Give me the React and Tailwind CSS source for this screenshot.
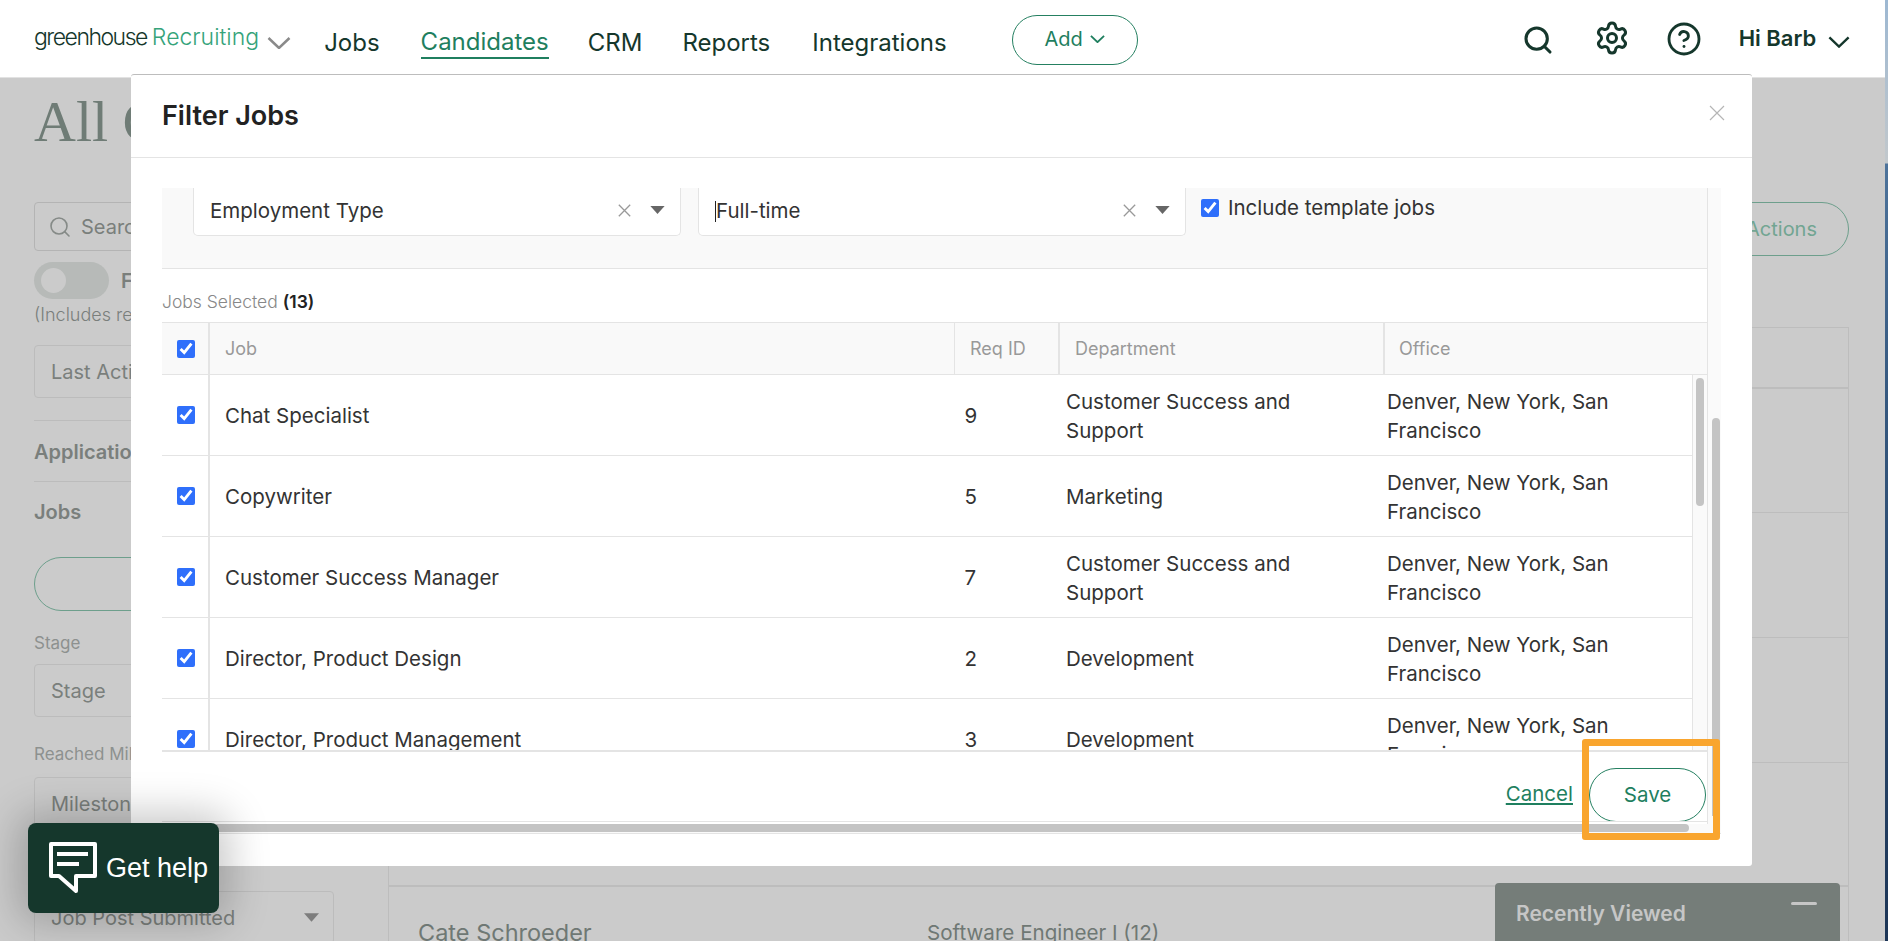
import React from "react";
import { Search, Settings, CircleHelp } from "lucide-react";

const Chevron = ({ className, sw = 2 }) => (
  <svg viewBox="0 0 24 12" fill="none" stroke="currentColor" strokeWidth={sw} className={className}>
    <polyline points="1.5,1 12,11 22.5,1" />
  </svg>
);
const Cross = ({ className, sw = 1.6 }) => (
  <svg viewBox="0 0 16 16" fill="none" stroke="currentColor" strokeWidth={sw} className={className}>
    <path d="M1 1 15 15M15 1 1 15" />
  </svg>
);
const Caret = ({ className }) => (
  <svg viewBox="0 0 16 9" fill="currentColor" className={className}>
    <polygon points="0,0 16,0 8,9" />
  </svg>
);
const Check = () => (
  <input type="checkbox" checked readOnly className="m-0 h-[18px] w-[18px] accent-[#2f6ffb]" />
);

const rows = [
  ["Chat Specialist", "9", ["Customer Success and", "Support"]],
  ["Copywriter", "5", ["Marketing"]],
  ["Customer Success Manager", "7", ["Customer Success and", "Support"]],
  ["Director, Product Design", "2", ["Development"]],
  ["Director, Product Management", "3", ["Development"]],
];

const GreyBox = ({ children, className = "" }) => (
  <div className={`flex h-[53px] w-[300px] items-center rounded-[4px] border border-[#bcbcbc] pl-[16px] text-[20px] text-[#7a7f7c] ${className}`}>
    {children}
  </div>
);

function Sidebar() {
  return (
    <div className="ml-[34px] flex w-[300px] shrink-0 flex-col text-[#7a7f7c]">
      <div className="mt-[12px] h-[64px] whitespace-nowrap [font-family:Liberation_Serif,serif] text-[58px] leading-[64px] text-[#6f7c76]">All Candidates</div>
      <div className="mt-[48px] flex h-[49px] w-[300px] items-center rounded-[4px] border border-[#b4b4b4] pl-[13px] text-[20px]">
        <Search className="h-[24px] w-[24px] text-[#858a87]" strokeWidth={1.6} />
        <span className="ml-[9px]">Search</span>
      </div>
      <div className="mt-[11px] flex h-[37px] items-center">
        <div className="flex h-[37px] w-[75px] items-center rounded-full bg-[#b7bab8] pl-[7px]">
          <div className="h-[25px] w-[25px] rounded-full bg-[#cbcbcb]" />
        </div>
        <span className="ml-[12px] text-[20px] font-semibold">Full Stage</span>
      </div>
      <div className="mt-[4px] h-[24px] whitespace-nowrap text-[18px] font-light leading-[24px]">(Includes results)</div>
      <GreyBox className="mt-[18px]">Last Activity</GreyBox>
      <div className="mt-[22px] flex h-[62px] items-center border-y border-[#bcbcbc] pt-[2px] text-[20px] font-semibold">Application</div>
      <div className="flex h-[60px] items-center text-[20px] font-semibold">Jobs</div>
      <div className="mt-[15px] flex h-[54px] items-center justify-center rounded-full border border-[#6d9f8c] text-[20px] text-[#6d9f8c]">Filter</div>
      <div className="mt-[20px] h-[24px] text-[17px] leading-[24px] text-[#8d918f]">Stage</div>
      <GreyBox className="mt-[9px]">Stage</GreyBox>
      <div className="mt-[25px] h-[24px] whitespace-nowrap text-[17px] leading-[24px] text-[#8d918f]">Reached Milestone</div>
      <GreyBox className="mt-[11px]">Milestone</GreyBox>
      <GreyBox className="mt-[61px] justify-between pr-[14px]">
        Job Post Submitted
        <Caret className="h-[9px] w-[15px] text-[#7d7d7d]" />
      </GreyBox>
    </div>
  );
}

function MainPanel() {
  return (
    <div className="ml-[54px] flex w-[1461px] shrink-0 flex-col">
      <div className="mt-[124px] flex h-[54px] justify-end">
        <div className="flex w-[220px] items-center justify-end rounded-full border border-[#6d9f8c] pr-[31px] text-[20px] text-[#72a592]">Actions</div>
      </div>
      <div className="mt-[71px] flex flex-col border-x border-t border-[#bdbdbd]">
        <div className="h-[61px] border-b-2 border-[#bdbdbd]" />
        <div className="h-[124px] border-b border-[#bdbdbd]" />
        <div className="h-[125px] border-b border-[#bdbdbd]" />
        <div className="h-[125px] border-b border-[#bdbdbd]" />
        <div className="h-[124px] border-b-2 border-[#bdbdbd]" />
        <div className="flex whitespace-nowrap pl-[29px] pt-[30px] text-[#6f7874]">
          <span className="w-[509px] text-[23.5px] leading-[32px]">Cate Schroeder</span>
          <span className="text-[20.6px] leading-[32px]">Software Engineer I (12)</span>
        </div>
      </div>
    </div>
  );
}

function SelectBox({ className = "", cursor, label }) {
  return (
    <div className={`flex h-[48px] w-[488px] items-center rounded-b-[5px] border-x border-b border-[#e4e4e4] bg-white pb-[1px] pl-[16px] pr-[15px] text-[20.5px] text-[#333] ${className}`}>
      {cursor && <span className="h-[21px] w-px bg-[#222]" />}
      <span className="flex-1">{label}</span>
      <Cross className="mb-[2px] h-[13px] w-[13px] text-[#999]" />
      <Caret className="mb-[2px] ml-[19px] h-[8px] w-[15px] text-[#666]" />
    </div>
  );
}

function TableRow({ job, req, dept }) {
  return (
    <div className="flex h-[81px] shrink-0 border-b-[1.5px] border-[#e4e4e4] text-[20.5px] leading-[29px] text-[#333]">
      <div className="flex w-[48px] shrink-0 items-center justify-center border-r-2 border-[#e4e4e4] pl-[2px]">
        <Check />
      </div>
      <div className="flex w-[754.5px] shrink-0 items-center pl-[15px]">{job}</div>
      <div className="flex w-[101.5px] shrink-0 items-center">{req}</div>
      <div className={dept.length > 1 ? "flex w-[321px] shrink-0 flex-col justify-center pt-[2px]" : "flex w-[321px] shrink-0 flex-col justify-center"}>
        {dept.map((d) => (
          <div key={d}>{d}</div>
        ))}
      </div>
      <div className="flex flex-col justify-center whitespace-nowrap pt-[2px]">
        <div>Denver, New York, San</div>
        <div>Francisco</div>
      </div>
    </div>
  );
}

function IncludeTemplate() {
  return (
    <div className="ml-[15px] flex items-center pt-[8px] text-[20.5px] leading-[24px] text-[#333]">
      <Check />
      <span className="ml-[9px]">Include template jobs</span>
    </div>
  );
}

function Modal() {
  return (
    <div className="absolute left-[131px] top-[74px] flex h-[792px] w-[1621px] flex-col rounded-[3px] border-t border-[#bdbdbd] bg-white">
      <div className="flex h-[83px] shrink-0 items-center justify-between border-b border-[#e4e4e4] pl-[31px] pr-[27px]">
        <span className="text-[27px] font-semibold text-[#222]">Filter Jobs</span>
        <Cross className="mb-[6px] h-[16px] w-[16px] text-[#b5b5b5]" sw={1.2} />
      </div>
      <div className="ml-[31px] mt-[30px] flex h-[646px] w-[1559px] shrink-0 flex-col overflow-hidden">
        <div className="flex h-[636px] shrink-0">
          <div className="flex w-[1545px] shrink-0 flex-col">
            <div className="flex h-[81px] shrink-0 items-start border-b border-[#e4e4e4] bg-[#f9f9f9] pl-[31px]">
              <SelectBox label="Employment Type" />
              <SelectBox className="ml-[17px]" cursor label="Full-time" />
              <IncludeTemplate />
            </div>
            <div className="flex h-[53px] shrink-0 items-center pt-[13px] text-[17.5px] font-light text-[#888]">
              Jobs Selected<b className="ml-[5px] font-semibold text-[#222]">(13)</b>
            </div>
            <div className="flex h-[53px] shrink-0 border-y border-[#e4e4e4] bg-[#f9f9f9] text-[18px] text-[#999]">
              <div className="flex w-[48px] shrink-0 items-center justify-center border-r-2 border-[#e4e4e4] pl-[2px]">
                <Check />
              </div>
              <div className="flex w-[745px] shrink-0 items-center border-r border-[#e4e4e4] pl-[15px]">Job</div>
              <div className="flex w-[105px] shrink-0 items-center border-r-2 border-[#e4e4e4] pl-[15px]">Req ID</div>
              <div className="flex w-[325px] shrink-0 items-center border-r-2 border-[#e4e4e4] pl-[15px]">Department</div>
              <div className="flex flex-1 items-center pl-[14px]">Office</div>
            </div>
            <div className="flex h-[377px] shrink-0 overflow-hidden border-b-2 border-[#e4e4e4]">
              <div className="flex w-[1530px] shrink-0 flex-col">
                {rows.map((r) => (
                  <TableRow key={r[0]} job={r[0]} req={r[1]} dept={r[2]} />
                ))}
              </div>
              <div className="flex flex-1 flex-col border-l border-[#e4e4e4] bg-[#fafafa] pl-[3px] pt-[3px]">
                <div className="h-[128px] w-[8px] rounded-[4px] bg-[#c4c4c4]" />
              </div>
            </div>
            <div className="flex h-[70px] shrink-0 items-start justify-end overflow-hidden border-b-[1.5px] border-[#e4e4e4]">
              <a className="mr-[16px] mt-[29px] text-[20.5px] leading-[26px] text-[#1f7f5f] underline decoration-2 underline-offset-2">Cancel</a>
              <div className="mr-[1px] mt-[16px] flex h-[54px] w-[117px] shrink-0 items-center justify-center rounded-full border border-[#258061] text-[20.5px] text-[#1f7f5f]">Save</div>
            </div>
          </div>
          <div className="flex flex-1 flex-col border-l border-[#e4e4e4] bg-[#fafafa] pl-[4px] pt-[230px]">
            <div className="h-[398px] w-[8px] rounded-t-[4px] bg-[#c4c4c4]" />
          </div>
        </div>
        <div className="h-[10px] shrink-0 border-b border-[#e4e4e4] bg-[#fafafa]">
          <div className="h-[8px] w-[1527px] rounded-r-[4px] bg-[#c4c4c4]" />
        </div>
      </div>
      <div className="absolute left-[1451px] top-[664px] h-[101px] w-[138px] rounded-[3px] border-[7px] border-[#f9a52e]" />
    </div>
  );
}

function Header() {
  return (
    <div className="flex h-[78px] shrink-0 items-center border-b border-[#e2e2e2] bg-white text-[#15372c]">
      <div className="mb-[2px] ml-[34px] flex items-baseline whitespace-nowrap">
        <span className="text-[23px] font-light tracking-[-1.5px]">greenhouse</span>
        <span className="ml-[5px] text-[23px] font-light text-[#35a37a]">Recruiting</span>
      </div>
      <Chevron className="ml-[8px] mt-[8px] h-[12px] w-[24px] text-[#8a8a8a]" sw={2.5} />
      <nav className="ml-[33px] mt-[8px] flex items-center text-[24px]">
        <span>Jobs</span>
        <span className="ml-[41px] border-b-2 border-[#1f7f5f] leading-[30px] text-[#1f7f5f]">Candidates</span>
        <span className="ml-[39px]">CRM</span>
        <span className="ml-[40px]">Reports</span>
        <span className="ml-[42px]">Integrations</span>
      </nav>
      <div className="ml-[65px] mt-[2px] flex h-[50px] w-[126px] items-center justify-center rounded-full border border-[#258061] pb-[1px] text-[20px] text-[#1f7f5f]">
        Add
        <Chevron className="ml-[7px] h-[8px] w-[15px]" sw={3} />
      </div>
      <Search className="ml-[384px] mt-[2px] h-[32px] w-[32px]" strokeWidth={2.3} />
      <Settings className="ml-[40px] mb-[2px] h-[36px] w-[36px]" strokeWidth={2} />
      <CircleHelp className="ml-[36px] h-[36px] w-[36px]" strokeWidth={1.9} />
      <span className="ml-[37px] text-[22px] font-semibold">Hi Barb</span>
      <Chevron className="ml-[12px] mt-[6px] h-[12px] w-[22px]" sw={2.6} />
    </div>
  );
}

export default function App() {
  return (
    <div className="relative flex h-[941px] w-[1888px] overflow-hidden [font-family:Inter,sans-serif]">
      <div className="flex h-full w-[1885px] shrink-0 flex-col bg-[#cbcbcb]">
        <Header />
        <div className="flex min-h-0 flex-1 items-start overflow-hidden">
          <Sidebar />
          <MainPanel />
        </div>
      </div>
      <div className="h-full w-[3px] shrink-0 bg-[linear-gradient(to_bottom,#9db8d2_0px,#c2c8cc_163px,#4d739b_164px,#35587f_400px,#1c3556_941px)]" />
      <Modal />
      <div className="absolute left-[28px] top-[823px] flex h-[90px] w-[191px] items-center rounded-[8px] bg-[#15372c] pl-[21px] shadow-[0_0_40px_10px_rgba(0,0,0,0.22)]">
        <svg viewBox="0 0 48 52" fill="none" stroke="white" className="h-[52px] w-[48px]">
          <path d="M2 2H46V34H27V49L10 34H2Z" strokeWidth="4" strokeLinejoin="round" />
          <path d="M8 12H39M8 22H30" strokeWidth="4" />
        </svg>
        <span className="ml-[9px] [font-family:Liberation_Sans,sans-serif] text-[27px] text-white">Get help</span>
      </div>
      <div className="absolute left-[1495px] top-[883px] h-[70px] w-[345px] rounded-t-[4px] bg-[#757d79] pl-[21px] pt-[16px] text-[21px] font-semibold leading-[30px] text-[#c6c6c6]">
        Recently Viewed
        <div className="absolute left-[296px] top-[19px] h-[3px] w-[26px] rounded-[2px] bg-[#c6c6c6]" />
      </div>
    </div>
  );
}
